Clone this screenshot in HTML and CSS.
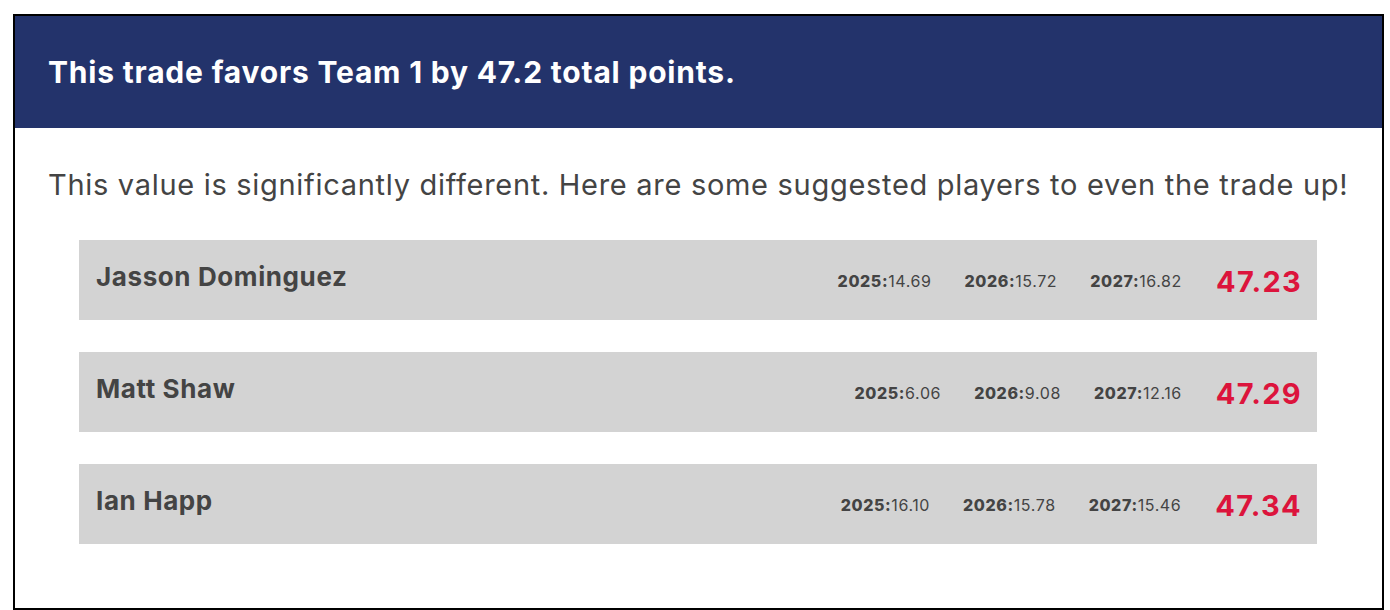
FILE: index.html
```html
<!DOCTYPE html>
<html lang="en">
<head>
<meta charset="utf-8">
<title>Trade result</title>
<link rel="stylesheet" href="styles.css">
</head>
<body>
<div class="card">
  <div class="banner">This trade favors Team 1 by 47.2 total points.</div>
  <div class="content">
    <p class="note">This value is significantly different. Here are some suggested players to even the trade up!</p>
    <ul class="players">
      <li class="player">
        <span class="name">Jasson Dominguez</span>
        <span class="stats">
          <span class="stat"><b>2025:</b>14.69</span>
          <span class="stat"><b>2026:</b>15.72</span>
          <span class="stat"><b>2027:</b>16.82</span>
        </span>
        <span class="total">47.23</span>
      </li>
      <li class="player">
        <span class="name">Matt Shaw</span>
        <span class="stats">
          <span class="stat"><b>2025:</b>6.06</span>
          <span class="stat"><b>2026:</b>9.08</span>
          <span class="stat"><b>2027:</b>12.16</span>
        </span>
        <span class="total">47.29</span>
      </li>
      <li class="player">
        <span class="name">Ian Happ</span>
        <span class="stats">
          <span class="stat"><b>2025:</b>16.10</span>
          <span class="stat"><b>2026:</b>15.78</span>
          <span class="stat"><b>2027:</b>15.46</span>
        </span>
        <span class="total">47.34</span>
      </li>
    </ul>
  </div>
</div>
</body>
</html>
```
FILE: styles.css
```css
html, body {
  margin: 0;
  padding: 0;
  background: #ffffff;
}
body {
  padding: 14px 0 0 13px;
  font-family: Inter, "Liberation Sans", sans-serif;
  overflow: hidden;
}
.card {
  width: 1367px;
  height: 592px;
  border: 2px solid #000;
  background: #fff;
}
.banner {
  height: 112px;
  box-sizing: border-box;
  background: #23336b;
  color: #fff;
  font-size: 30px;
  font-weight: 700;
  letter-spacing: 0.8px;
  display: flex;
  align-items: center;
  padding: 0 33px;
}
.note {
  margin: 0;
  padding: 40px 33px 0;
  font-size: 29px;
  line-height: 34px;
  letter-spacing: 0.7px;
  color: #444;
}
.players {
  list-style: none;
  margin: 38px 65px 0 64px;
  padding: 0;
  display: flex;
  flex-direction: column;
  gap: 32px;
}
.player {
  height: 80px;
  background: #d3d3d3;
  display: flex;
  align-items: center;
  padding: 0 15px 0 17px;
  color: #444;
}
.name {
  font-size: 26px;
  font-weight: 700;
  letter-spacing: 0.6px;
  flex: 1;
  margin-top: -7px;
}
.stats {
  display: flex;
  gap: 33px;
  font-size: 16px;
  letter-spacing: 0.6px;
  margin-right: 34px;
  margin-top: 1px;
}
.stat b {
  font-weight: 800;
}
.total {
  font-size: 29px;
  font-weight: 700;
  letter-spacing: 1.3px;
  color: #dc143c;
  margin-top: 2px;
}
```
